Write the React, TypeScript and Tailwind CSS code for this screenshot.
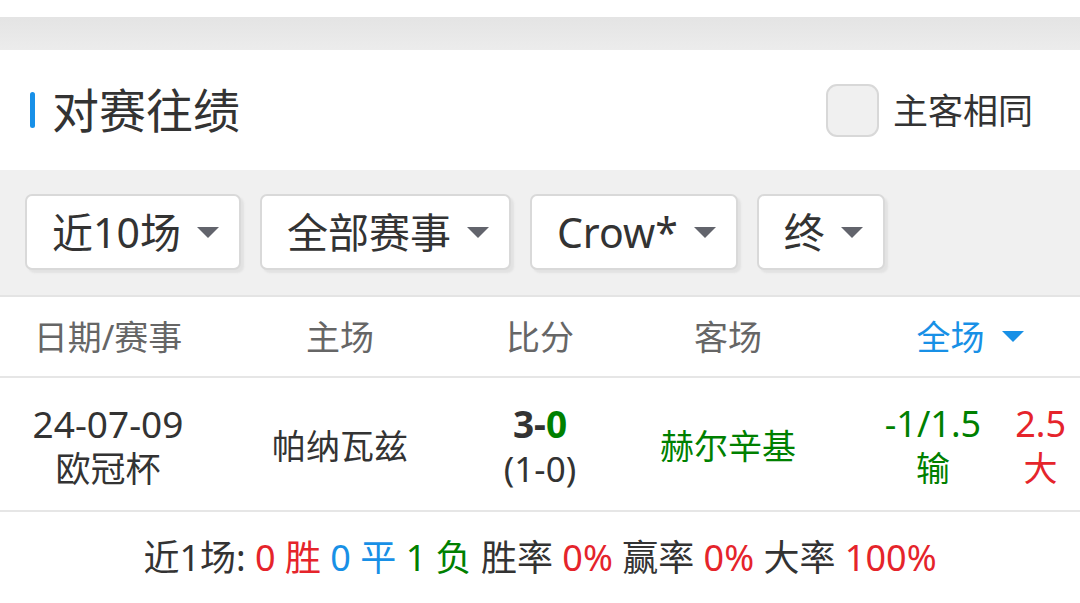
const font = { fontFamily: '"Noto Sans", "Noto Sans CJK SC", sans-serif' };

function Caret({ color = '#62646c' }: { color?: string }) {
  return (
    <svg width="22" height="11" viewBox="0 0 22 11" className="shrink-0">
      <path d="M0 0 L22 0 L11 11 Z" fill={color} />
    </svg>
  );
}

function FilterButton({ label }: { label: string }) {
  return (
    <div className="flex h-[76px] items-center gap-[16px] rounded-[7px] border-2 border-[#d9d9d9] bg-white pl-[25px] pr-[20px] shadow-[3px_3px_2px_#e2e2e2]">
      <span className="text-[41px] leading-none text-[#333]">{label}</span>
      <Caret />
    </div>
  );
}

const cols = 'grid grid-cols-[216px_248px_152px_224px_240px]';

export default function App() {
  return (
    <div className="w-[1080px] h-[603px] overflow-hidden bg-white" style={font}>
      {/* top gap */}
      <div className="h-[17px] bg-white" />
      <div className="h-[33px] bg-gradient-to-b from-[#e4e4e4] to-[#ececec]" />

      {/* title row */}
      <div className="flex h-[120px] items-center justify-between pl-[30px] pr-[47px]">
        <div className="flex items-center gap-[17px]">
          <div className="h-[36px] w-[5px] rounded-full bg-[#1890e8]" />
          <h2 className="text-[47px] leading-none text-[#333]">对赛往绩</h2>
        </div>
        <div className="flex items-center gap-[14px]">
          <div className="h-[53px] w-[53px] rounded-[11px] border-2 border-[#d8d8d8] bg-[#f0f0f0]" />
          <span className="text-[35px] leading-none text-[#333]">主客相同</span>
        </div>
      </div>

      {/* filters */}
      <div className="flex h-[127px] items-center gap-[19px] border-b-2 border-[#e4e4e4] bg-[#f0f0f0] px-[25px] pb-[1px]">
        <FilterButton label="近10场" />
        <FilterButton label="全部赛事" />
        <FilterButton label="Crow*" />
        <FilterButton label="终" />
      </div>

      {/* table header */}
      <div className={`${cols} h-[81px] items-center border-b-2 border-[#e6e6e6] text-[34px] leading-none text-[#666]`}>
        <div className="text-center">日期/赛事</div>
        <div className="text-center">主场</div>
        <div className="text-center">比分</div>
        <div className="text-center">客场</div>
        <div className="flex items-center justify-center gap-[17px] pl-[20px] text-[#1890e6]">
          <span>全场</span>
          <Caret color="#1890e6" />
        </div>
      </div>

      {/* data row */}
      <div className={`${cols} h-[134px] items-center border-b-2 border-[#e6e6e6] pt-[4px] text-[34px] leading-[45px] text-[#333]`}>
        <div className="flex flex-col items-center">
          <span className="text-[37px]">24-07-09</span>
          <span className="text-[35px]">欧冠杯</span>
        </div>
        <div className="text-center">帕纳瓦兹</div>
        <div className="flex flex-col items-center">
          <span className="text-[37px] font-bold">
            3-<span className="text-[#008000]">0</span>
          </span>
          <span className="text-[35px]">(1-0)</span>
        </div>
        <div className="text-center text-[#008000]">赫尔辛基</div>
        <div className="flex justify-end gap-[34px] pr-[14px] text-[36px]">
          <div className="flex flex-col items-center text-[#008000]">
            <span>-1/1.5</span>
            <span className="text-[34px]">输</span>
          </div>
          <div className="flex flex-col items-center text-[#e5242b]">
            <span>2.5</span>
            <span className="text-[34px]">大</span>
          </div>
        </div>
      </div>

      {/* summary */}
      <div className="flex h-[88px] items-center justify-center whitespace-pre pt-[4px] text-[36px] leading-none text-[#333]">
        <span>近1场: </span>
        <span className="text-[#e5242b]">0 胜 </span>
        <span className="text-[#1890e6]">0 平 </span>
        <span className="text-[#008000]">1 负 </span>
        <span>胜率 </span>
        <span className="text-[#e5242b]">0% </span>
        <span>赢率 </span>
        <span className="text-[#e5242b]">0% </span>
        <span>大率 </span>
        <span className="text-[#e5242b]">100%</span>
      </div>
    </div>
  );
}
